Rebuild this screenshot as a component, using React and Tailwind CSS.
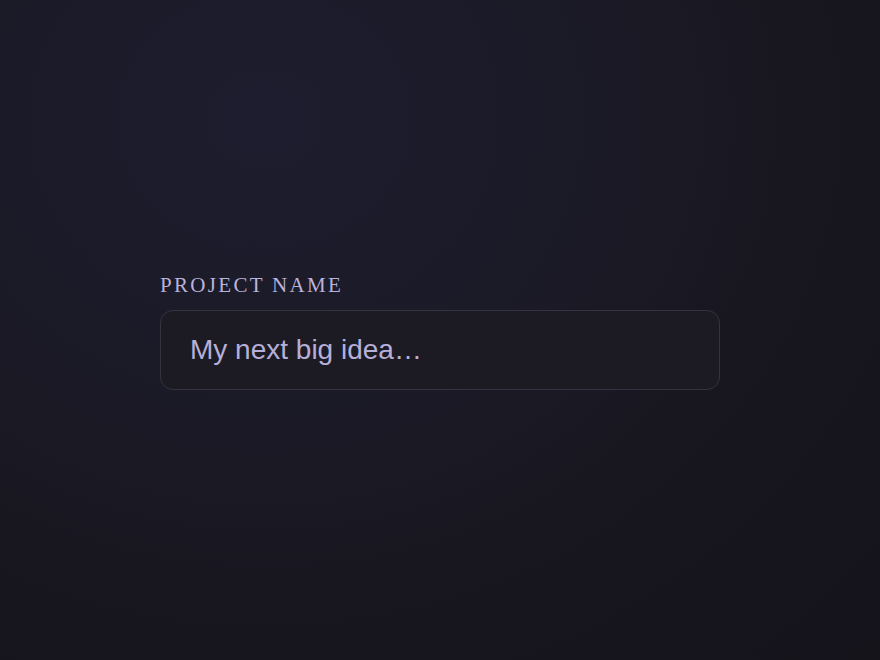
export default function App() {
  return (
    <div className="min-h-screen w-full flex items-center justify-center bg-[#16151c] bg-[radial-gradient(ellipse_at_30%_18%,#1e1d2f_0%,#1b1a27_35%,#17161e_70%,#15141b_100%)]">
      <div className="w-[560px] flex flex-col pt-[2px]">
        <label
          htmlFor="project"
          className="block text-[21px] leading-[26px] tracking-[0.11em] text-[#bab2da] mb-[12px] uppercase"
          style={{ fontFamily: '"Liberation Serif", "DejaVu Serif", serif' }}
        >
          Project Name
        </label>
        <input
          id="project"
          type="text"
          placeholder="My next big idea…"
          className="w-full h-[80px] rounded-[13px] border border-[#34333f] bg-[#1c1b24] px-[29px] text-[28px] text-[#b8b1d8] placeholder:text-[#b6afd7] outline-none"
          style={{ fontFamily: '"Liberation Sans", Arial, sans-serif' }}
        />
      </div>
    </div>
  );
}
